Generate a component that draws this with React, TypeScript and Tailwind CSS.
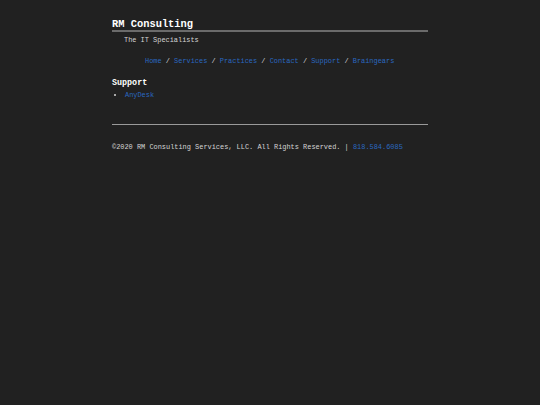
import React from 'react';

const links = ['Home', 'Services', 'Practices', 'Contact', 'Support', 'Braingears'];

export default function App() {
  return (
    <div className="min-h-[405px] bg-[#212121] text-[#d4d4d4] font-['Liberation_Mono',monospace]">
      <div className="w-[316px] ml-[112px] pt-[19px]">
        <h1 className="text-[10.4px] leading-[11px] font-bold text-white border-b-2 border-[#6b6b6b]">
          RM Consulting
        </h1>
        <p className="text-[6.93px] leading-[9px] pl-[12px] mt-[4px]">The IT Specialists</p>
        <nav className="text-[6.93px] leading-[9px] pl-[33px] mt-[12px]">
          {links.map((l, i) => (
            <span key={l}>
              {i > 0 && ' / '}
              <a className="text-[#2a68c0]">{l}</a>
            </span>
          ))}
        </nav>
        <h2 className="text-[8.4px] leading-[11px] font-bold text-white mt-[12px]">Support</h2>
        <ul className="text-[6.93px] leading-[9px] mt-[2px] pl-[13px] list-disc">
          <li>
            <a className="text-[#2a68c0]">AnyDesk</a>
          </li>
        </ul>
        <hr className="border-t border-[#9a9a9a] mt-[24px]" />
        <p className="text-[6.93px] leading-[9px] mt-[18px]">
          ©2020 RM Consulting Services, LLC. All Rights Reserved. |{' '}
          <a className="text-[#2a68c0]">818.584.6085</a>
        </p>
      </div>
    </div>
  );
}
